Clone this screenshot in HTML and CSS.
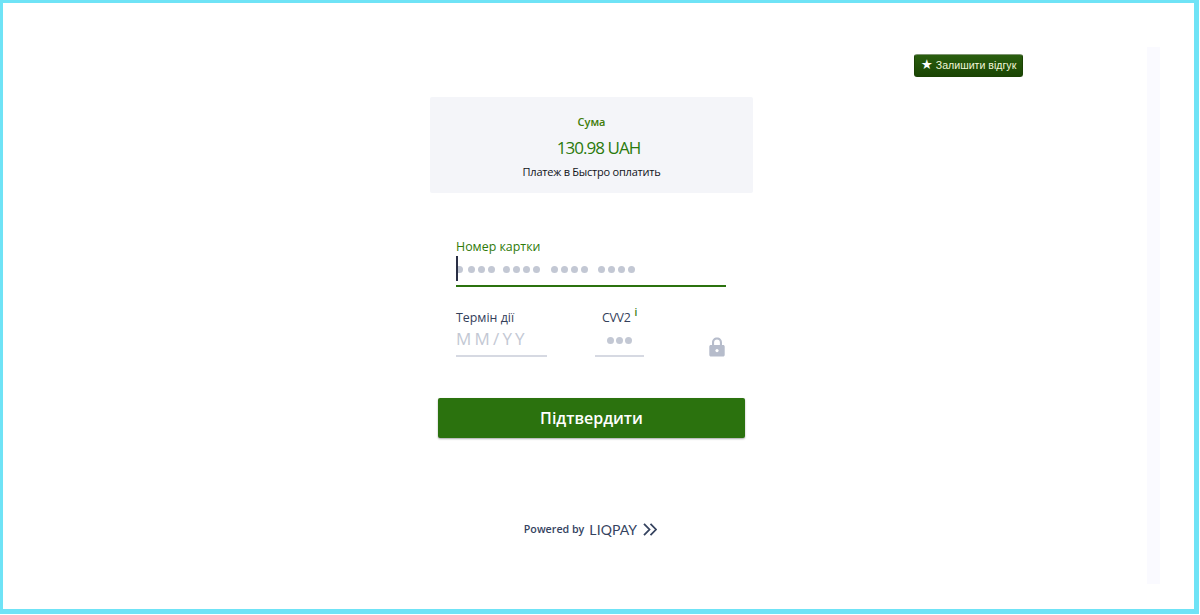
FILE: index.html
```html
<!DOCTYPE html>
<html lang="uk">
<head>
<meta charset="utf-8">
<title>LiqPay</title>
<link rel="stylesheet" href="styles.css">
</head>
<body>
<div class="frame">
  <main class="main">
    <div class="feedback-row">
      <a class="feedback"><span class="star">★</span> Залишити відгук</a>
    </div>
    <div class="column">
      <section class="summary">
        <div class="sum-label">Сума</div>
        <div class="sum-value">130.98 UAH</div>
        <div class="sum-desc">Платеж в Быстро оплатить</div>
      </section>
      <form class="form">
        <div class="field-card">
          <div class="label label-active">Номер картки</div>
          <div class="card-input">
            <span class="caret"></span>
            <span class="dots">
              <span class="group"><i></i><i></i><i></i><i></i></span>
              <span class="group"><i></i><i></i><i></i><i></i></span>
              <span class="group"><i></i><i></i><i></i><i></i></span>
              <span class="group"><i></i><i></i><i></i><i></i></span>
            </span>
          </div>
        </div>
        <div class="row">
          <div class="field-exp">
            <div class="label">Термін дії</div>
            <div class="exp-input">MM/YY</div>
          </div>
          <div class="field-cvv">
            <div class="label cvv-label">CVV2<sup class="info">i</sup></div>
            <div class="cvv-input"><span class="group"><i></i><i></i><i></i></span></div>
          </div>
          <svg class="lock" width="16" height="20" viewBox="0 0 16 20"><path fill="#b6bccb" d="M8 0.5C5 .5 3 2.6 3 5.6V8H2C.9 8 .3 8.7 .3 9.7v8c0 1 .7 1.8 1.7 1.8h12c1 0 1.7-.8 1.7-1.8v-8c0-1-.6-1.7-1.7-1.7h-1V5.6C13 2.6 11 .5 8 .5zM8 2.6c1.8 0 2.9 1.2 2.9 3V8H5.1V5.6c0-1.8 1.1-3 2.9-3z"/><circle cx="8" cy="13.6" r="1.6" fill="#fff"/></svg>
        </div>
        <button class="submit" type="button">Підтвердити</button>
      </form>
      <div class="powered">
        <span class="powered-by">Powered by</span>
        <span class="liqpay">LIQPAY</span>
        <svg class="chevrons" width="14" height="13" viewBox="0 0 14 13"><path fill="none" stroke="#35435f" stroke-width="1.8" d="M1 .8l5.5 5.7L1 12.2M7.5 .8l5.5 5.7-5.5 5.7"/></svg>
      </div>
    </div>
  </main>
  <aside class="strip"></aside>
</div>
</body>
</html>
```
FILE: styles.css
```css
* { box-sizing: border-box; }
html, body { margin: 0; padding: 0; background: #fff; }
body { font-family: "Open Sans", "Noto Sans", sans-serif; }
.frame {
  width: 1199px;
  height: 614px;
  border-style: solid;
  border-color: #6fe3f6;
  border-width: 3px 5px 5px 3px;
  display: flex;
  overflow: hidden;
}
.main { width: 1144px; }
.strip {
  width: 13px;
  height: 537px;
  margin-top: 44px;
  background: #fafaff;
}
.feedback-row {
  display: flex;
  padding: 51px 0 0 911px;
}
.feedback {
  width: 109px;
  height: 23px;
  border-radius: 3px;
  border: 1px solid #1a4204;
  border-top-color: #7d9470;
  background: linear-gradient(#2a5e0e, #1a4504);
  color: #f2f7d8;
  font: 10.6px/21px "Liberation Sans", Arial, sans-serif;
  text-align: center;
  white-space: nowrap;
}
.star { font-family: "DejaVu Sans", sans-serif; font-size: 13.5px; line-height: 1; color: #fff; }
.column { width: 323px; margin: 20px 0 0 427px; }
.summary {
  height: 96px;
  padding-top: 17px;
  background: #f4f5f9;
  border-radius: 2px;
  text-align: center;
}
.sum-label { font-size: 11px; line-height: 16px; font-weight: 600; color: #3f7c08; }
.sum-value { margin-top: 7px; padding-left: 14px; font-size: 17px; line-height: 22px; color: #2b7a0c; letter-spacing: -.95px; }
.sum-desc { margin-top: 5px; font-size: 11px; line-height: 16px; color: #10131a; letter-spacing: -.23px; }
.form { padding: 44px 0 0 8px; }
.field-card { width: 270px; margin-left: 18px; }
.label { font-size: 12.4px; line-height: 17px; color: #33405a; }
.label-active { color: #2f7a08; padding-top: 1px; height: 18px; }
.card-input {
  height: 31px;
  margin-top: 1px;
  border-bottom: 2px solid #2b720e;
  display: flex;
  align-items: flex-start;
}
.caret { width: 2px; height: 25px; background: #2a2f45; }
.dots { display: flex; gap: 10.3px; margin: 10px 0 0 0; }
.group { display: flex; gap: 3px; }
.group i { width: 7px; height: 7px; border-radius: 50%; background: #c3c8d4; }
.dots .group:first-child { margin-right: -2px; }
.dots .group:first-child i:first-child { width: 5px; margin-right: 2px; border-radius: 0 4px 4px 0; }
.row { display: flex; margin: 22px 0 0 18px; height: 49px; width: 288px; }
.field-exp { width: 91px; }
.exp-input {
  height: 31px;
  padding-top: 1px;
  border-bottom: 2px solid #d6d9e2;
  color: #c3c8d4;
  font-size: 17px;
  line-height: 23px;
  letter-spacing: 3.2px;
}
.field-cvv { width: 49px; margin-left: 48px; }
.cvv-label { margin-left: 7px; white-space: nowrap; letter-spacing: -.3px; }
.info { font-size: 10px; line-height: 0; margin-left: 4px; color: #2f7a08; font-weight: 600; position: relative; top: -1px; vertical-align: super; }
.cvv-input {
  height: 31px;
  padding: 11px 0 0 12px;
  border-bottom: 2px solid #d6d9e2;
}
.cvv-input .group { gap: 1.4px; }
.cvv-input .group i { width: 7.4px; height: 7.4px; }
.lock { margin: 28px 0 0 65px; flex: none; }
.submit {
  display: block;
  width: 307px;
  height: 40px;
  margin-top: 40px;
  border: 0;
  border-radius: 2px;
  background: #2b720e;
  box-shadow: 0 1px 2px rgba(0,0,0,.35);
  color: #fff;
  font: 600 16px/40px "Open Sans", sans-serif;
  letter-spacing: -.02px;
  padding: 0;
}
.powered {
  display: flex;
  align-items: center;
  justify-content: center;
  margin-top: 81px;
  height: 20px;
  padding-right: 2px;
  color: #35435f;
}
.powered-by { font-size: 10.7px; font-weight: 600; margin-right: 5px; }
.liqpay { font-family: "Lato", sans-serif; font-size: 14px; letter-spacing: .1px; margin-right: 6px; }
```
